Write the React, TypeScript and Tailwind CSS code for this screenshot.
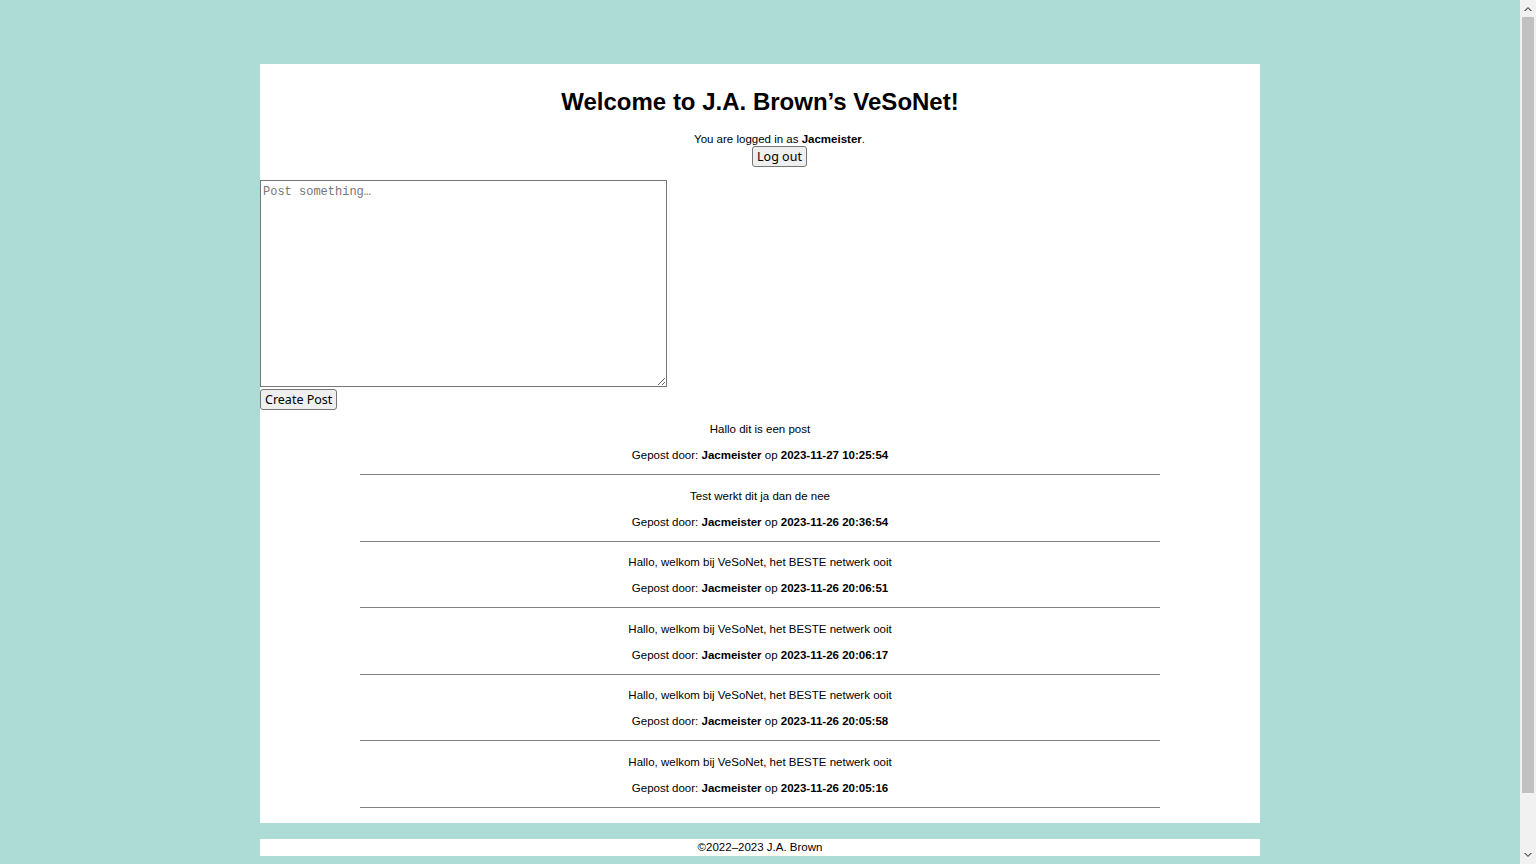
export default function App() {
  const posts = [
    { text: "Hallo dit is een post", date: "2023-11-27 10:25:54" },
    { text: "Test werkt dit ja dan de nee", date: "2023-11-26 20:36:54" },
    { text: "Hallo, welkom bij VeSoNet, het BESTE netwerk ooit", date: "2023-11-26 20:06:51" },
    { text: "Hallo, welkom bij VeSoNet, het BESTE netwerk ooit", date: "2023-11-26 20:06:17" },
    { text: "Hallo, welkom bij VeSoNet, het BESTE netwerk ooit", date: "2023-11-26 20:05:58" },
    { text: "Hallo, welkom bij VeSoNet, het BESTE netwerk ooit", date: "2023-11-26 20:05:16" },
  ];

  return (
    <div className="min-h-[920px] bg-[#addcd6] pt-16 pr-4 pb-16 font-['Liberation_Sans',Arial,sans-serif] text-[11.5px] text-black">
      <main className="mx-auto w-[1000px] bg-white pt-6 pb-[15.5px]">
        <h1 className="text-center text-[24px] font-bold leading-[28px]">
          Welcome to J.A. Brown’s VeSoNet!
        </h1>

        <div className="mt-4 ml-[39px] flex flex-col items-center">
          <p className="leading-[14px]">
            You are logged in as <b>Jacmeister</b>.
          </p>
          <button className="rounded-[3px] border border-[#767676] bg-[#efefef] px-[4px] font-['Noto_Sans',sans-serif] text-[12.5px] leading-[19px]">
            Log out
          </button>
        </div>

        <div className="mt-[13px] flex flex-col items-start">
          <textarea
            className="h-[207px] w-[407px] resize border border-[#767676] px-[2px] pt-[4px] font-['Liberation_Mono',monospace] text-[12px] leading-[15px] placeholder:text-[#757575]"
            placeholder="Post something…"
          />
          <button className="mt-[2px] rounded-[3px] border border-[#767676] bg-[#efefef] px-[4px] font-['Noto_Sans',sans-serif] text-[12.5px] leading-[19px]">
            Create Post
          </button>
        </div>

        <section className="mx-auto -mt-[1.5px] flex w-[800px] flex-col">
          {posts.map((post, i) => (
            <div key={i} className="flex flex-col gap-3 pt-[13.5px] text-center">
              <p className="leading-[14px]">{post.text}</p>
              <p className="leading-[14px]">
                Gepost door: <b>Jacmeister</b> op <b>{post.date}</b>
              </p>
              <div className="h-px bg-[#808080]" />
            </div>
          ))}
        </section>
      </main>

      <footer className="mx-auto mt-4 w-[1000px] bg-white text-center leading-[17px]">
        ©2022–2023 J.A. Brown
      </footer>

      <div className="fixed top-0 right-0 flex h-screen w-4 flex-col bg-[#f1f1f1]">
        <div className="flex h-[17px] items-center justify-center">
          <svg width="8" height="5" viewBox="0 0 8 5" fill="#505050">
            <path d="M0 5 L4 1 L8 5 L6.5 5 L4 2.5 L1.5 5 Z" />
          </svg>
        </div>
        <div className="mx-[2px] h-[776px] bg-[#c1c1c1]" />
        <div className="flex-1" />
        <div className="flex h-[17px] items-center justify-center">
          <svg width="8" height="5" viewBox="0 0 8 5" fill="#505050">
            <path d="M0 0 L4 4 L8 0 L6.5 0 L4 2.5 L1.5 0 Z" />
          </svg>
        </div>
      </div>
    </div>
  );
}
